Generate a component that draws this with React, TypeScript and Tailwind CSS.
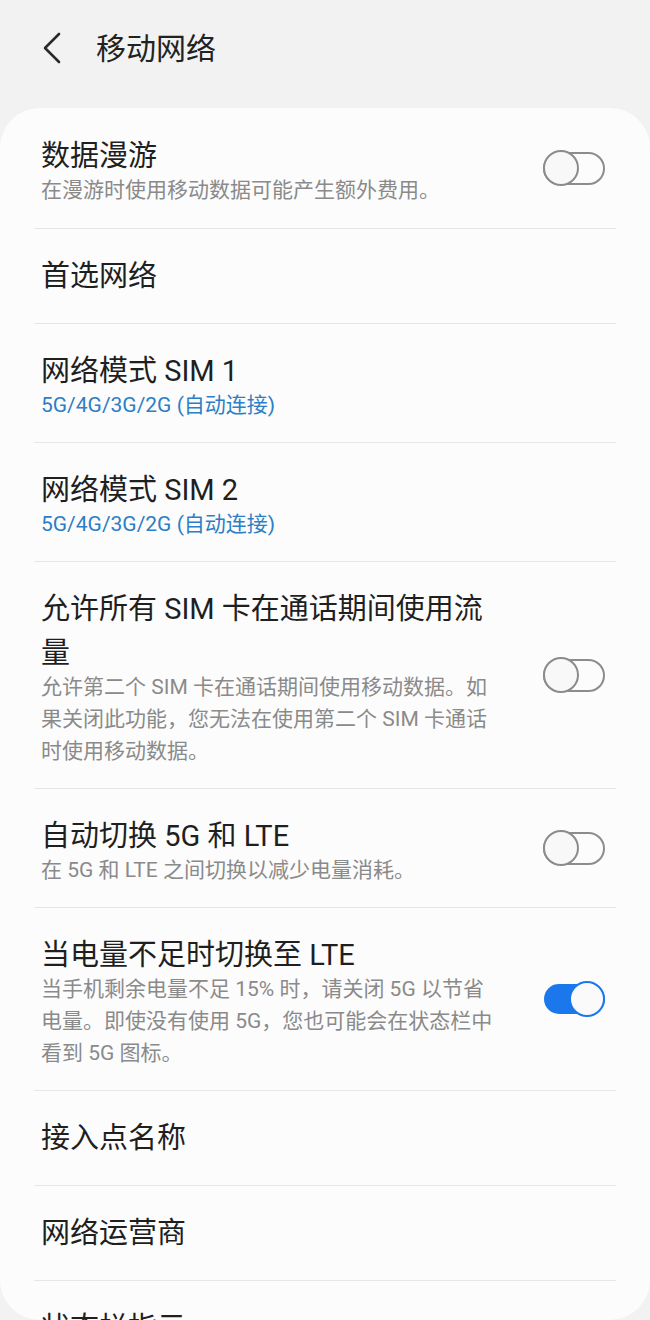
import React from "react";

type Row = {
  title: string[];
  sub?: string[];
  subBlue?: boolean;
  toggle?: "on" | "off";
};

const rows: Row[] = [
  { title: ["数据漫游"], sub: ["在漫游时使用移动数据可能产生额外费用。"], toggle: "off" },
  { title: ["首选网络"] },
  { title: ["网络模式 SIM 1"], sub: ["5G/4G/3G/2G (自动连接)"], subBlue: true },
  { title: ["网络模式 SIM 2"], sub: ["5G/4G/3G/2G (自动连接)"], subBlue: true },
  {
    title: ["允许所有 SIM 卡在通话期间使用流", "量"],
    sub: [
      "允许第二个 SIM 卡在通话期间使用移动数据。如",
      "果关闭此功能，您无法在使用第二个 SIM 卡通话",
      "时使用移动数据。",
    ],
    toggle: "off",
  },
  { title: ["自动切换 5G 和 LTE"], sub: ["在 5G 和 LTE 之间切换以减少电量消耗。"], toggle: "off" },
  {
    title: ["当电量不足时切换至 LTE"],
    sub: [
      "当手机剩余电量不足 15% 时，请关闭 5G 以节省",
      "电量。即使没有使用 5G，您也可能会在状态栏中",
      "看到 5G 图标。",
    ],
    toggle: "on",
  },
  { title: ["接入点名称"] },
  { title: ["网络运营商"] },
  { title: ["状态栏指示"] },
];

function Toggle({ on }: { on: boolean }) {
  if (on) {
    return (
      <div className="relative w-[61px] h-[36px] flex items-center mr-[4px] mb-[4px]">
        <div className="w-full h-[30px] rounded-full bg-[#1a78ec]" />
        <div className="absolute right-0 top-0 w-[36px] h-[36px] rounded-full border-2 border-[#1a78ec] bg-[#fafafa]" />
      </div>
    );
  }
  return (
    <div className="relative w-[62px] h-[36px] flex items-center mr-[4px] mb-[4px]">
      <div className="w-full h-[33px] rounded-full border-2 border-[#8c8c8c]" />
      <div className="absolute left-0 top-0 w-[36px] h-[36px] rounded-full border-2 border-[#8c8c8c] bg-[#f8f8f8]" />
    </div>
  );
}

export default function App() {
  return (
    <div
      className="h-[1320px] overflow-hidden bg-[#f2f2f2] flex flex-col"
      style={{ fontFamily: "Roboto, 'Noto Sans CJK SC', sans-serif" }}
    >
      <div className="h-[96px] flex items-center pl-[42px] shrink-0">
        <svg width="20" height="32" viewBox="0 0 20 32" fill="none">
          <path d="M17 2 L3 16 L17 30" stroke="#2a2a2a" strokeWidth="2.6" strokeLinecap="round" strokeLinejoin="round" />
        </svg>
        <h1 className="ml-[34px] mt-[2px] text-[30px] leading-none text-[#222]">移动网络</h1>
      </div>

      <div className="mt-[12px] flex-1 rounded-[40px] overflow-hidden bg-[#fcfcfc] px-[34px]">
        {rows.map((r, i) => (
          <div
            key={i}
            className={
              (i === 0 ? "pt-[26px] pb-[22px] " : "border-t border-[#e6e6e6] pt-[25px] ") +
              (i === 0 ? "" : r.sub ? "pb-[21px] " : "pb-[25px] ") +
              "px-[7px] flex items-center justify-between"
            }
          >
            <div className="flex flex-col">
              {r.title.map((t, j) => (
                <span key={j} className="block whitespace-nowrap text-[29px] leading-[44px] text-[#1f1f1f]">
                  {t}
                </span>
              ))}
              {r.sub && (
                <div className="mt-[-4px]">
                  {r.sub.map((s, j) => (
                    <span
                      key={j}
                      className={
                        "block whitespace-nowrap text-[21px] leading-[32px] " +
                        (r.subBlue ? "text-[#2c7fc6]" : "text-[#8a8a8a]")
                      }
                    >
                      {s}
                    </span>
                  ))}
                </div>
              )}
            </div>
            {r.toggle && <Toggle on={r.toggle === "on"} />}
          </div>
        ))}
      </div>
    </div>
  );
}
